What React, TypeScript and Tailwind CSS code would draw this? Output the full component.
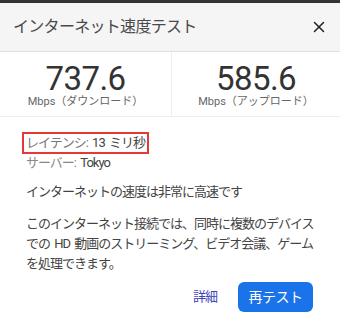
import { X } from "lucide-react";

const font = { fontFamily: "Roboto, 'Noto Sans CJK JP', sans-serif" };

function Stat({ value, label }: { value: string; label: string }) {
  return (
    <div className="flex flex-col items-center pt-[10px]">
      <div className="text-[33px] leading-[33px] tracking-[-0.6px] text-[#333]">{value}</div>
      <div className="text-[11px] leading-[13px] text-[#666]">{label}</div>
    </div>
  );
}

export default function App() {
  return (
    <div className="w-[340px] h-[317px] bg-white overflow-hidden" style={font}>
      <div className="h-[3px] bg-[#333]" />

      {/* header */}
      <div className="h-[49px] bg-[#f5f5f5] border-b border-[#e0e0e0] flex items-center justify-between pl-[13px] pr-[12px]">
        <span className="text-[16px] tracking-[-0.7px] text-[#4a4a4a]">インターネット速度テスト</span>
        <X className="w-[18px] h-[18px] text-[#222]" strokeWidth={2} />
      </div>

      {/* stats */}
      <div className="grid grid-cols-[172px_1fr] h-[65px] border-b border-[#eee]">
        <div className="border-r border-[#eee]">
          <Stat value="737.6" label="Mbps（ダウンロード）" />
        </div>
        <Stat value="585.6" label="Mbps（アップロード）" />
      </div>

      {/* details */}
      <div className="pl-[22px] pr-[20px] pt-[15px] text-[13px] tracking-[-1px] [word-spacing:2px] text-[#444]">
        <div className="inline-block border-2 border-[#e53935] px-[2px] h-[22px] leading-[18px]">
          <span className="text-[#777]">レイテンシ:</span> 13 ミリ秒
        </div>
        <div className="pl-[4px] leading-[18px]">
          <span className="text-[#888]">サーバー:</span> Tokyo
        </div>
        <p className="pl-[4px] mt-[10px] leading-[20px]">インターネットの速度は非常に高速です</p>
        <p className="pl-[4px] mt-[12px] leading-[20px]">
          このインターネット接続では、同時に複数のデバイスでの HD 動画のストリーミング、ビデオ会議、ゲームを処理できます。
        </p>
        <div className="flex items-center justify-end gap-[21px] mt-[8px] mr-[7px]">
          <span className="text-[#3b44b8]">詳細</span>
          <button className="w-[75px] h-[30px] rounded-[6px] bg-[#1a73e8] text-white text-[14px] tracking-[-0.5px]">
            再テスト
          </button>
        </div>
      </div>
    </div>
  );
}
